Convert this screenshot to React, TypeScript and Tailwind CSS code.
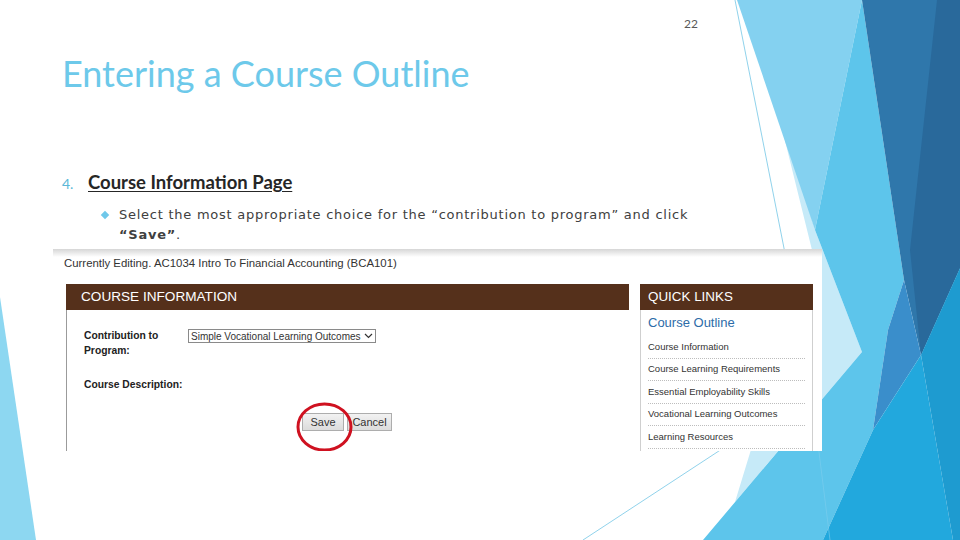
import React from 'react';

const quickLinks = [
  'Course Information',
  'Course Learning Requirements',
  'Essential Employability Skills',
  'Vocational Learning Outcomes',
  'Learning Resources',
];

// Facet-style background shapes on the right and the left edge
const Backdrop = () => (
  <svg className="absolute inset-0" width="960" height="540" viewBox="0 0 960 540">
    <polygon points="0,297 36,540 0,540" fill="#8dd7f1" />
    <polygon points="770,80 815,230 862,352 735,502 812,250" fill="#c6eaf8" />
    <polygon points="737,0 862,0 815,230" fill="#84d1f0" />
    <polygon points="862,0 904,280 888,330 873,430 823,540 703,540 862,352 815,230" fill="#5dc5eb" />
    <polygon points="862,0 960,0 960,268 921,355 904,280" fill="#2f77ab" />
    <polygon points="937,0 960,0 960,268 921,355 910,250" fill="#29699b" />
    <polygon points="904,280 921,355 873,430 888,330" fill="#3a8ecb" />
    <polygon points="921,355 953,540 823,540 873,430" fill="#22a8dd" />
    <polygon points="921,355 960,268 960,540 953,540" fill="#1e9bd0" />
    <polyline points="735,0 812,390 583,540" fill="none" stroke="#74c6e6" strokeWidth="0.8" />
    <line x1="815" y1="420" x2="830" y2="540" stroke="#7dcfee" strokeWidth="0.6" />
  </svg>
);

const Screenshot = () => (
  <div className="relative ml-[53px] mt-[4px] h-[202px] w-[769px] overflow-hidden bg-white font-['Liberation_Sans',Arial,sans-serif]">
    <div className="h-[8px] bg-gradient-to-b from-[#d6d6d6] to-white" />
    <div className="h-[13px] pl-[11px] text-[11.4px] leading-[13px] text-[#333]">
      Currently Editing. AC1034 Intro To Financial Accounting (BCA101)
    </div>
    <div className="mt-[14px] flex gap-[11px] pl-[13px]">
      {/* course information panel */}
      <div className="flex w-[563px] flex-col">
        <div className="flex h-[26px] items-center bg-[#55301b] pl-[15px] text-[13.6px] text-white">
          COURSE INFORMATION
        </div>
        <div className="h-[141px] border-l border-[#9b9b9b] pl-[17px]">
          <div className="mt-[18px] flex">
            <div className="w-[104px] text-[10.3px] font-bold leading-[15px] text-[#222]">
              Contribution to
              <br />
              Program:
            </div>
            <div className="mt-[1px] flex h-[14px] w-[188px] items-center justify-between border border-[#8a8a8a] pl-[2px] pr-[2px] text-[10px] text-[#333]">
              <span>Simple Vocational Learning Outcomes</span>
              <svg width="9" height="6" viewBox="0 0 9 6">
                <path d="M1 1 L4.5 4.5 L8 1" fill="none" stroke="#333" strokeWidth="1.2" />
              </svg>
            </div>
          </div>
          <div className="mt-[19px] text-[10.3px] font-bold leading-[15px] text-[#222]">
            Course Description:
          </div>
          <div className="ml-[218px] mt-[21px] flex gap-[3px] text-[11px] text-[#333]">
            <div className="flex h-[18px] w-[42px] items-center justify-center border border-[#adadad] bg-gradient-to-b from-[#f2f2f2] to-[#dcdcdc]">
              Save
            </div>
            <div className="flex h-[18px] w-[45px] items-center justify-center border border-[#adadad] bg-gradient-to-b from-[#f2f2f2] to-[#dcdcdc]">
              Cancel
            </div>
          </div>
        </div>
      </div>
      {/* quick links panel */}
      <div className="flex w-[173px] flex-col">
        <div className="flex h-[26px] items-center bg-[#55301b] pl-[8px] text-[13.4px] text-white">
          QUICK LINKS
        </div>
        <div className="h-[141px] border-l border-r border-[#cfcfcf] px-[7px]">
          <div className="flex h-[26px] items-center text-[13px] text-[#2d6ca8]">Course Outline</div>
          {quickLinks.map((link) => (
            <div
              key={link}
              className="flex h-[22.6px] items-center border-b border-dotted border-[#bdbdbd] text-[9.5px] text-[#333]"
            >
              {link}
            </div>
          ))}
        </div>
      </div>
    </div>
    <svg className="absolute left-[243px] top-[153px]" width="57" height="50" viewBox="0 0 57 50">
      <ellipse cx="28.5" cy="25" rx="26.5" ry="23" fill="none" stroke="#cf1120" strokeWidth="3" />
    </svg>
  </div>
);

const App = () => {
  return (
    <div className="relative h-[540px] w-[960px] overflow-hidden bg-white">
      <Backdrop />
      <div className="relative flex flex-col">
        <div className="w-[698px] pt-[17px] text-right font-['Lato',sans-serif] text-[12px] leading-[14px] text-[#595959]">
          22
        </div>
        <h1 className="ml-[62px] mt-[22px] font-['Lato',sans-serif] text-[36px] leading-[40px] text-[#6dc9ea]">
          Entering a Course Outline
        </h1>

        {/* numbered item */}
        <div className="ml-[62px] mt-[79px] flex items-baseline font-['Lato',sans-serif] leading-[20px]">
          <span className="w-[26px] text-[14px] text-[#5bb8d8]">4.</span>
          <span className="text-[18.5px] font-bold text-[#262626] underline underline-offset-2">
            Course Information Page
          </span>
        </div>

        {/* bullet */}
        <div className="ml-[102px] mt-[11px] flex font-['DejaVu_Sans',sans-serif] text-[13px] leading-[20px] tracking-[0.75px] text-[#404040]">
          <div className="mt-[7px] h-[6px] w-[6px] shrink-0 rotate-45 bg-[#6fc8ea]" />
          <div className="ml-[11px]">
            Select the most appropriate choice for the “contribution to program” and click
            <br />
            <span className="font-bold">“Save”</span>.
          </div>
        </div>

        <Screenshot />
      </div>
    </div>
  );
};

export default App;
